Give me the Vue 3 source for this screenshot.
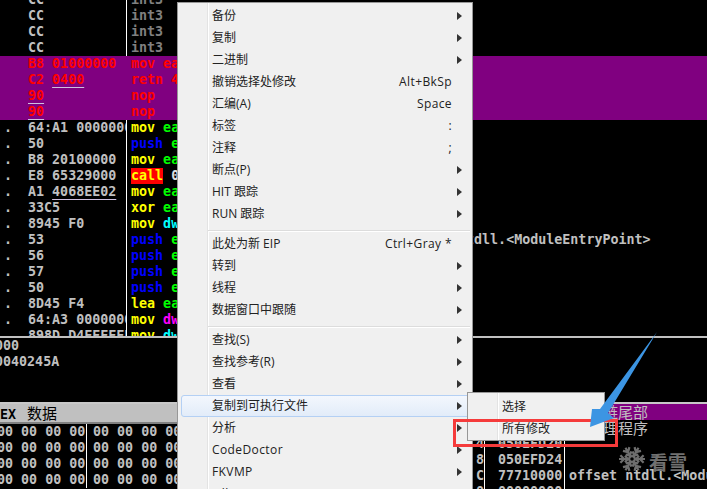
<script setup>
const codeRows = [
  { hex: 'CC', ops: [['gray', 'int3']] },
  { hex: 'CC', ops: [['gray', 'int3']] },
  { hex: 'CC', ops: [['gray', 'int3']] },
  { hex: 'CC', ops: [['gray', 'int3']] },
  { hex: 'B8', arg: '01000000', ops: [['red', 'mov eax,1']], hit: true },
  { hex: 'C2', arg: '0400', line: 'arg', ops: [['red', 'retn 4']], hit: true },
  { hex: '90', line: 'hex', ops: [['red', 'nop']], hit: true },
  { hex: '90', line: 'hex', ops: [['red', 'nop']], hit: true },
  { dot: 1, hex: '64:A1', arg: '00000000', ops: [['yel', 'mov'], ['grn', ' eax,dword ptr fs:[0]']] },
  { dot: 1, hex: '50', ops: [['blu', 'push'], ['grn', ' eax']] },
  { dot: 1, hex: 'B8', arg: '20100000', ops: [['yel', 'mov'], ['grn', ' eax,0x1020']] },
  { dot: 1, hex: 'E8', arg: '65329000', ops: [['call', 'call'], ['wht', ' 00402A5A']] },
  { dot: 1, hex: 'A1', arg: '4068EE02', line: 'arg', ops: [['yel', 'mov'], ['grn', ' eax,dword ptr ds:[0x2EE6840]']] },
  { dot: 1, hex: '33C5', ops: [['yel', 'xor'], ['grn', ' eax,ebp']] },
  { dot: 1, hex: '8945', arg: 'F0', ops: [['yel', 'mov'], ['cyn', ' dword ptr ss:[ebp-0x10],eax']] },
  { dot: 1, hex: '53', ops: [['blu', 'push'], ['grn', ' ebx']], note: 'ntdll.<ModuleEntryPoint>' },
  { dot: 1, hex: '56', ops: [['blu', 'push'], ['grn', ' esi']] },
  { dot: 1, hex: '57', ops: [['blu', 'push'], ['grn', ' edi']] },
  { dot: 1, hex: '50', ops: [['blu', 'push'], ['grn', ' eax']] },
  { dot: 1, hex: '8D45', arg: 'F4', ops: [['yel', 'lea'], ['grn', ' eax,dword ptr ss:[ebp-0xC]']] },
  { dot: 1, hex: '64:A3', arg: '00000000', ops: [['yel', 'mov'], ['mag', ' dword ptr fs:[0],eax']] },
  { dot: 1, hex: '898D', arg: 'D4FEFFFF', ops: [['yel', 'mov'], ['cyn', ' dword ptr ss:[ebp-0x12C],ecx']] }
]

const menuItems = [
  { t: '备份', sub: 1 }, { t: '复制', sub: 1 }, { t: '二进制', sub: 1 },
  { t: '撤销选择处修改', key: 'Alt+BkSp' }, { t: '汇编(A)', key: 'Space' },
  { t: '标签', key: ':' }, { t: '注释', key: ';' }, { t: '断点(P)', sub: 1 },
  { t: 'HIT 跟踪', sub: 1 }, { t: 'RUN 跟踪', sub: 1 }, { sep: 1 },
  { t: '此处为新 EIP', key: 'Ctrl+Gray *' }, { t: '转到', sub: 1 }, { t: '线程', sub: 1 },
  { t: '数据窗口中跟随', sub: 1 }, { sep: 1 },
  { t: '查找(S)', sub: 1 }, { t: '查找参考(R)', sub: 1 }, { t: '查看', sub: 1 },
  { t: '复制到可执行文件', sub: 1, hover: 1 }, { t: '分析', sub: 1 },
  { t: 'CodeDoctor', sub: 1, wide: 1 }, { t: 'FKVMP', sub: 1, wide: 1 }, { t: 'OllyDump', sub: 1, wide: 1 }
]

const dumpRows = [0, 1, 2, 3]
const stackRows = [
  ['4', '050EFD20', ''],
  ['8', '050EFD24', ''],
  ['C', '77710000', 'offset ntdll.<ModuleEntryPoint>'],
  ['0', '00000000', '']
]
const flakeArms = [30, 90, 150, 210, 270, 330]
</script>

<template>
  <div class="screen">
    <section class="code">
      <div v-for="(r, i) in codeRows" :key="i" class="row" :class="{ hit: r.hit }">
        <div class="hexcol">
          <span class="mark">{{ r.dot ? '.' : '' }}</span>
          <span :class="{ ul: r.line === 'hex' }">{{ r.hex }}</span>
          <template v-if="r.arg">&nbsp;<span :class="{ ul: r.line === 'arg' }">{{ r.arg }}</span></template>
        </div>
        <div class="discol">
          <span v-for="(o, j) in r.ops" :key="j" :class="o[0]">{{ o[1] }}</span>
        </div>
        <div v-if="r.note" class="note">{{ r.note }}</div>
      </div>
    </section>

    <section class="info">
      <div>000</div>
      <div>0040245A</div>
    </section>

    <section class="lower">
      <div class="dump">
        <div class="dumphead"><span class="hexword">HEX</span><span class="cjk title">数据</span></div>
        <div class="dumpbody">
          <div v-for="d in dumpRows" :key="d" class="dumprow">
            <span class="bytes first">00 00 00 00</span>
            <span class="bytes second">00 00 00 00 00 00 00 00 00 00 00 00</span>
          </div>
        </div>
      </div>
      <div class="stack">
        <div class="stackhead cjk">链尾部</div>
        <div class="stacksub cjk">理程序</div>
        <div v-for="s in stackRows" :key="s[1]" class="stackrow">
          <span class="addr">{{ s[0] }}</span>
          <span class="val">{{ s[1] }}</span>
          <span class="cmt">{{ s[2] }}</span>
        </div>
      </div>
    </section>

    <div class="watermark">
      <svg class="flake" width="28" height="26" viewBox="-15 -14 30 28" fill="none" stroke="#6e6e6e" stroke-width="2.4">
        <g v-for="a in flakeArms" :key="a" :transform="`rotate(${a})`">
          <path d="M0 -3V-14M-4 -12.500L0 -8.500L4 -12.500M-3.500 -7.500L0 -4.500L3.500 -7.500" />
        </g>
        <circle r="3" />
      </svg>
      <span class="mark-text">看雪</span>
    </div>

    <nav class="menu">
      <template v-for="(m, i) in menuItems" :key="i">
        <div v-if="m.sep" class="sep"></div>
        <div v-else class="item" :class="{ hover: m.hover }">
          <span class="label" :class="{ wide: m.wide }">{{ m.t }}</span>
          <span v-if="m.key" class="key">{{ m.key }}</span>
          <i v-if="m.sub" class="tri"></i>
        </div>
      </template>
    </nav>

    <nav class="submenu">
      <div class="subitem">选择</div>
      <div class="subitem">所有修改</div>
    </nav>

    <div class="redbox"></div>

    <svg class="arrow" width="80" height="105" viewBox="585 328 80 105">
      <polygon points="657,332 608,413 614,418 590,427 592,409 600,409" fill="#3c95e3" />
    </svg>
  </div>
</template>

<style scoped>
.screen {
  position: relative;
  width: 707px;
  height: 489px;
  overflow: hidden;
  background: #000;
  color: #c0c0c0;
  font-family: "DejaVu Sans Mono", "Liberation Mono", monospace;
  font-size: 13.33px;
  font-weight: 700;
  line-height: 16px;
  white-space: pre;
}
.code {
  height: 344px;
  margin-top: -8px;
  overflow: hidden;
}
.row {
  display: flex;
  height: 16px;
}
.row.hit {
  background: #800080;
  color: #ff0000;
}
.hexcol {
  width: 126px;
  flex: none;
  overflow: hidden;
  border-right: 1px solid #fff;
}
.hit .hexcol {
  border-right-color: #800080;
}
.mark {
  display: inline-block;
  width: 28px;
  padding-left: 4px;
  box-sizing: border-box;
}
.ul {
  text-decoration: underline;
  text-decoration-color: #d0c0e0;
  text-decoration-thickness: 1px;
  text-underline-offset: 3px;
}
.discol {
  width: 327px;
  flex: none;
  padding-left: 4px;
  overflow: hidden;
}
.note { color: #c0c0c0; }
.gray { color: #808080; }
.red { color: #ff0000; }
.yel { color: #ffff00; }
.grn { color: #00ff00; }
.blu { color: #0000ff; }
.cyn { color: #00ffff; }
.mag { color: #ff00ff; }
.wht { color: #e0e0e0; }
.call {
  background: #ff0000;
  color: #ffff00;
  display: inline-block;
  height: 16px;
}
.info {
  height: 64px;
  border-top: 2px solid #c0c0c0;
  text-indent: -5px;
  overflow: hidden;
}
.lower {
  display: flex;
  height: 87px;
  border-top: 2px solid #c8c8c8;
}
.dump {
  width: 470px;
  flex: none;
  overflow: hidden;
}
.dumphead {
  height: 18px;
  line-height: 18px;
  background: #c0c0c0;
  color: #000;
  border-bottom: 2px solid #808080;
  text-indent: -8px;
}
.hexword { font-weight: 700; }
.title {
  font-size: 16px;
  font-weight: 400;
  margin-left: 11px;
  text-indent: 0;
}
.cjk {
  font-family: "Noto Sans CJK SC", sans-serif;
  font-size: 15px;
  font-weight: 400;
}
.dumprow {
  display: flex;
  height: 16px;
}
.bytes.first {
  width: 86px;
  flex: none;
  text-indent: -3px;
  border-right: 1px solid #fff;
  overflow: hidden;
}
.bytes.second {
  padding-left: 6px;
}
.stack {
  flex: 1;
  overflow: hidden;
}
.stackhead {
  height: 16px;
  line-height: 16px;
  background: #800080;
  padding-left: 133px;
}
.stacksub {
  height: 16px;
  line-height: 16px;
  padding-left: 133px;
}
.stackrow {
  display: flex;
  height: 16px;
}
.addr {
  width: 14px;
  flex: none;
  text-align: right;
  border-right: 1px solid #fff;
}
.val {
  width: 66px;
  flex: none;
  padding-left: 13px;
  border-right: 1px solid #fff;
}
.cmt {
  padding-left: 4px;
}
.watermark {
  position: absolute;
  left: 618px;
  top: 443px;
  display: flex;
  align-items: center;
  gap: 3px;
}
.mark-text {
  font-family: "Noto Sans CJK SC", sans-serif;
  font-size: 19px;
  font-weight: 700;
  line-height: 26px;
  color: #707070;
  padding-top: 6px;
}
.menu {
  position: absolute;
  left: 177px;
  top: 2px;
  width: 296px;
  height: 500px;
  box-sizing: border-box;
  padding-top: 2px;
  border: 1px solid #979797;
  background: linear-gradient(to right, #f0f0f0 29px, #e3e3e3 29px, #e3e3e3 30px, #fff 30px, #fff 31px, #f0f0f0 31px);
  color: #222;
  font-family: "Open Sans", "Noto Sans CJK SC", sans-serif;
  font-size: 12px;
  font-weight: 400;
  line-height: 22px;
}
.item {
  position: relative;
  display: flex;
  justify-content: space-between;
  height: 22px;
  padding: 0 20px 0 34px;
}
.key,
.wide {
  letter-spacing: 0.4px;
}
.item.hover {
  margin: 0 2px 0 3px;
  padding: 0 18px 0 30px;
  box-sizing: border-box;
  border: 1px solid #b4d0f4;
  border-radius: 3px;
  background: linear-gradient(to bottom, #f3f7fd, #e2ecf9);
  line-height: 20px;
}
.tri {
  position: absolute;
  left: 279px;
  top: 7px;
  border-style: solid;
  border-width: 4px 0 4px 5px;
  border-color: transparent transparent transparent #333;
}
.item.hover .tri {
  left: 275px;
  top: 6px;
}
.sep {
  height: 8px;
  box-sizing: border-box;
  margin-left: 30px;
  margin-right: 2px;
  padding-top: 5px;
}
.sep::after {
  content: "";
  display: block;
  height: 1px;
  background: #dcdcdc;
  border-bottom: 1px solid #fff;
}
.submenu {
  position: absolute;
  left: 467px;
  top: 392px;
  width: 138px;
  height: 49px;
  box-sizing: border-box;
  padding-top: 2px;
  border: 1px solid #979797;
  background: linear-gradient(to right, #f0f0f0 29px, #e3e3e3 29px, #e3e3e3 30px, #fff 30px, #fff 31px, #f0f0f0 31px);
  color: #222;
  font-family: "Noto Sans CJK SC", sans-serif;
  font-size: 12px;
  font-weight: 400;
  line-height: 22px;
}
.subitem {
  height: 22px;
  padding-left: 34px;
}
.redbox {
  position: absolute;
  left: 453px;
  top: 419px;
  width: 165px;
  height: 28px;
  box-sizing: border-box;
  border: 3.5px solid #f53b3b;
}
.arrow {
  position: absolute;
  left: 585px;
  top: 328px;
}
</style>
